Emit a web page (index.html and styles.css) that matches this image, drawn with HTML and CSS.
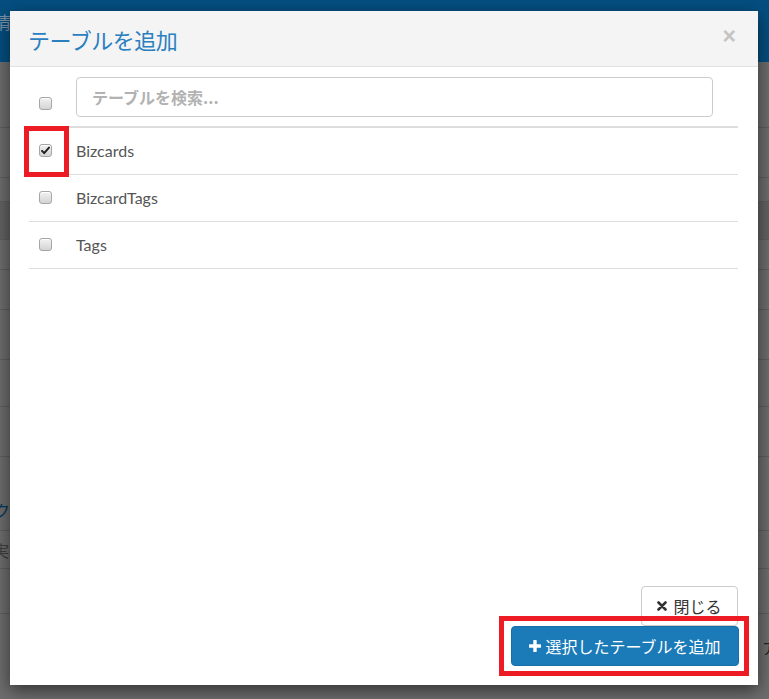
FILE: index.html
```html
<!DOCTYPE html>
<html lang="ja">
<head>
<meta charset="utf-8">
<title>テーブルを追加</title>
<link rel="stylesheet" href="styles.css">
</head>
<body>
<div class="page">
  <div class="topbar"><span class="topbar-text">情報</span></div>
  <div class="bg-row h66"></div>
  <div class="bg-row h50"></div>
  <div class="bg-row h24"></div>
  <div class="bg-row h38 dark"></div>
  <div class="bg-row h30"></div>
  <div class="bg-row h40"></div>
  <div class="bg-row h50"></div>
  <div class="bg-row h47"></div>
  <div class="bg-row h50"></div>
  <div class="bg-row h74"><span class="bg-link">クリック</span></div>
  <div class="bg-row h38"><span class="bg-text">実行</span></div>
  <div class="bg-row h45"></div>
  <div class="bg-row h40 right"><span class="bg-right">ア</span></div>
</div>

<div class="modal">
  <div class="modal-header">
    <h4 class="modal-title">テーブルを追加</h4>
    <span class="close">×</span>
  </div>
  <div class="modal-body">
    <table class="tbl">
      <thead>
        <tr>
          <th class="col-check"><span class="cb"></span></th>
          <th class="col-search"><input class="search" type="text" placeholder="テーブルを検索..."></th>
        </tr>
      </thead>
      <tbody>
        <tr>
          <td class="col-check"><span class="cb checked"><svg viewBox="0 0 12 12" width="11" height="11"><path d="M2.2 6.4 L4.6 8.9 L9.8 2.8" fill="none" stroke="#222" stroke-width="2.2" stroke-linecap="round" stroke-linejoin="round"/></svg></span></td>
          <td class="name">Bizcards</td>
        </tr>
        <tr>
          <td class="col-check"><span class="cb"></span></td>
          <td class="name">BizcardTags</td>
        </tr>
        <tr>
          <td class="col-check"><span class="cb"></span></td>
          <td class="name">Tags</td>
        </tr>
      </tbody>
    </table>
  </div>
  <div class="modal-footer">
    <button class="btn btn-default" type="button"><svg class="ico" viewBox="0 0 10 10" width="10" height="10"><path d="M1.5 1.5 L8.5 8.5 M8.5 1.5 L1.5 8.5" stroke="#333" stroke-width="2.6" stroke-linecap="round"/></svg>閉じる</button>
    <button class="btn btn-primary" type="button"><svg class="ico" viewBox="0 0 12 12" width="12" height="12"><path d="M6 1 V11 M1 6 H11" stroke="#fff" stroke-width="3.4" stroke-linecap="round"/></svg>選択したテーブルを追加</button>
  </div>
</div>

<div class="mark mark-check"></div>
<div class="mark mark-btn"></div>
</body>
</html>
```

FILE: styles.css
```css
html, body {
  margin: 0;
  padding: 0;
}
body {
  width: 769px;
  height: 699px;
  overflow: hidden;
  background: #6d6d6d;
  font-family: "Noto Sans CJK JP", sans-serif;
  position: relative;
}

/* dimmed page behind the dialog */
.page {
  display: flex;
  flex-direction: column;
}
.topbar {
  height: 62px;
  background: #044f80;
  display: flex;
  align-items: flex-start;
}
.topbar-text {
  margin: 9px 0 0 -6px;
  font-size: 17px;
  color: #7f93a8;
}
.bg-row {
  border-bottom: 1px solid #5e5e5e;
  box-sizing: border-box;
  display: flex;
  align-items: center;
  font-size: 16px;
}
.bg-row.dark { background: #626262; }
.h66 { height: 66px; }
.h50 { height: 50px; }
.h24 { height: 24px; }
.h38 { height: 38px; }
.h30 { height: 30px; }
.h40 { height: 40px; }
.h47 { height: 47px; }
.h74 { height: 74px; }
.h45 { height: 45px; }
.bg-link {
  color: #06395e;
  margin-left: -6px;
  margin-top: 32px;
}
.bg-text {
  color: #3e3e3e;
  margin-left: -7px;
}
.bg-row.right {
  border-bottom: none;
  justify-content: flex-end;
}
.bg-right {
  color: #222;
  margin-right: -8px;
  margin-top: 26px;
  font-size: 15px;
}

/* modal */
.modal {
  position: absolute;
  left: 10px;
  top: 11px;
  width: 748px;
  height: 674px;
  background: #fff;
  box-shadow: 0 5px 16px rgba(0, 0, 0, 0.55);
  display: flex;
  flex-direction: column;
}
.modal-header {
  height: 55px;
  background: #f4f4f4;
  border-bottom: 1px solid #e3e3e3;
  display: flex;
  align-items: center;
  justify-content: space-between;
  padding: 0 22px 0 18px;
}
.modal-title {
  margin: 0;
  font-size: 22px;
  font-weight: 400;
  color: #2a80bf;
  letter-spacing: -0.5px;
}
.close {
  font-family: "Liberation Sans", sans-serif;
  font-size: 23px;
  font-weight: 700;
  color: #c4c4c4;
  margin-top: -4px;
}
.modal-body {
  flex: 1;
  padding: 0 20px 0 19px;
}
.tbl {
  width: 709px;
  border-collapse: collapse;
}
.tbl th {
  height: 60px;
  padding: 0;
  border-bottom: 2px solid #dddddd;
  box-sizing: border-box;
}
.tbl th.col-check {
  vertical-align: bottom;
  padding: 0 0 16px 10px;
  text-align: left;
  width: 39px;
  box-sizing: border-box;
}
.tbl th.col-search {
  vertical-align: middle;
  text-align: left;
  padding-left: 8px;
}
.search {
  display: block;
  width: 637px;
  height: 40px;
  box-sizing: border-box;
  border: 1px solid #cccccc;
  border-radius: 4px;
  padding: 0 15px;
  font-family: "Noto Sans CJK JP", sans-serif;
  font-size: 16px;
  font-weight: 700;
  outline: none;
}
.search::placeholder {
  color: #b2b2b2;
}
.tbl td {
  height: 47px;
  box-sizing: border-box;
  border-bottom: 1px solid #dddddd;
  vertical-align: middle;
  padding: 0;
}
.tbl td.col-check {
  padding-left: 10px;
}
.tbl td.name {
  padding-left: 8px;
  font-family: "Lato", "Noto Sans CJK JP", sans-serif;
  font-size: 16px;
  color: #555555;
}
.cb {
  display: flex;
  align-items: center;
  justify-content: center;
  width: 13px;
  height: 13px;
  box-sizing: border-box;
  border: 1px solid #a6a6a6;
  border-radius: 3px;
  background: linear-gradient(#f2f2f2, #d4d4d4);
  box-shadow: inset 0 1px 0 #fff;
}

/* footer */
.modal-footer {
  display: flex;
  flex-direction: column;
  align-items: flex-end;
  padding: 0 19px 19px 0;
}
.btn {
  display: flex;
  align-items: center;
  gap: 5px;
  box-sizing: border-box;
  border-radius: 4px;
  font-family: "Noto Sans CJK JP", sans-serif;
  font-size: 16px;
  cursor: pointer;
  padding: 0;
  justify-content: center;
}
.btn-default {
  width: 97px;
  height: 40px;
  background: #fff;
  border: 1px solid #cccccc;
  color: #333;
  margin-right: 1px;
  gap: 6px;
}
.btn-primary {
  width: 228px;
  height: 40px;
  background: #1b7ab8;
  border: 1px solid #186ea6;
  color: #fff;
  gap: 4px;
}
.ico {
  flex: none;
}

/* annotation boxes */
.mark {
  position: absolute;
  border: 5px solid #ed1c24;
  box-sizing: border-box;
}
.mark-check {
  left: 24px;
  top: 126px;
  width: 45px;
  height: 51px;
}
.mark-btn {
  left: 499px;
  top: 616px;
  width: 250px;
  height: 60px;
}
```
